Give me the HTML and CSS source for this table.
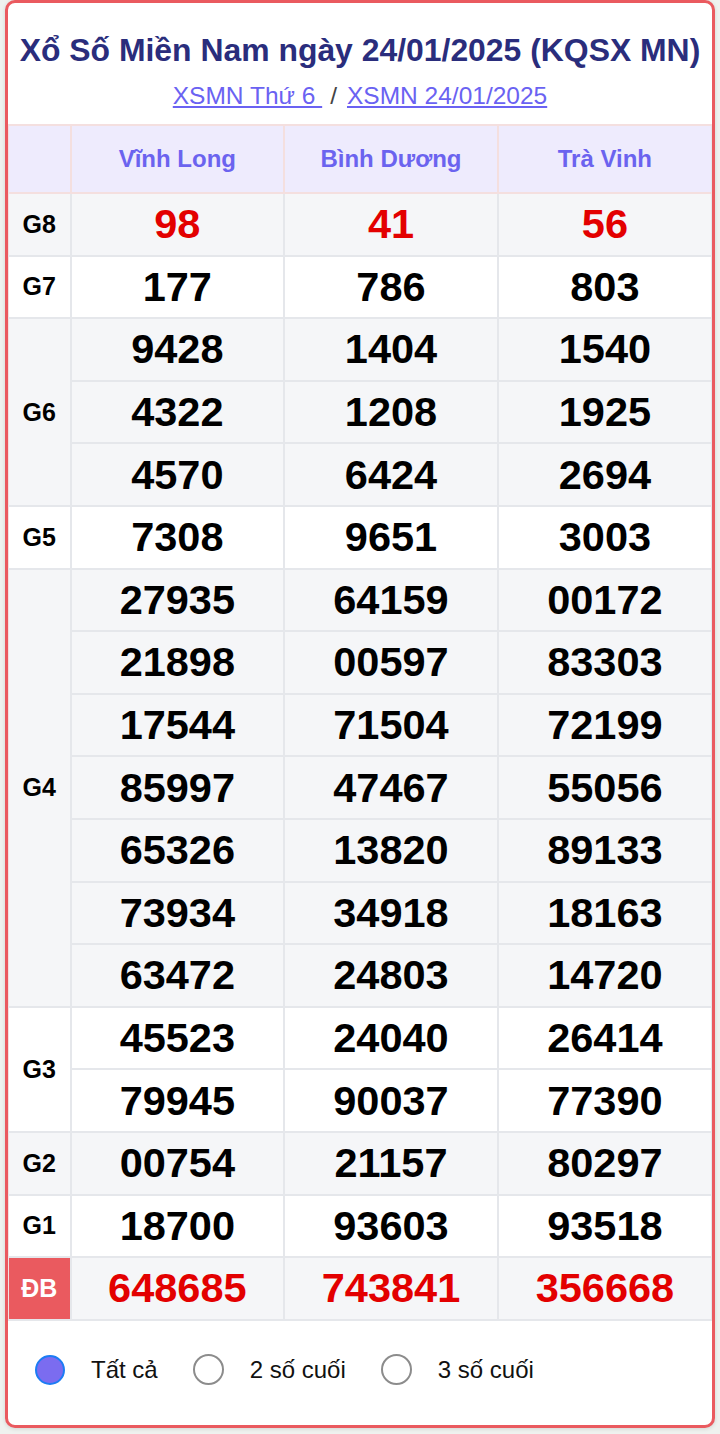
FILE: index.html
```html
<!DOCTYPE html>
<html lang="vi">
<head>
<meta charset="utf-8">
<title>XSMN 24/01/2025</title>
<link rel="stylesheet" href="styles.css">
</head>
<body>
<div class="card">
  <div class="head">
    <h1 class="title">Xổ Số Miền Nam ngày 24/01/2025 (KQSX MN)</h1>
    <div class="links"><a href="#">XSMN Thứ 6 </a><span class="sep">/</span><a href="#">XSMN 24/01/2025</a></div>
  </div>
  <table class="kq">
    <colgroup><col class="c-label"><col class="c-prov"><col class="c-prov"><col class="c-prov"></colgroup>
    <thead>
      <tr><th></th><th>Vĩnh Long</th><th>Bình Dương</th><th>Trà Vinh</th></tr>
    </thead>
    <tbody>
      <tr class="alt"><td class="lbl">G8</td><td class="num red">98</td><td class="num red">41</td><td class="num red">56</td></tr>
      <tr><td class="lbl">G7</td><td class="num">177</td><td class="num">786</td><td class="num">803</td></tr>
      <tr class="alt"><td class="lbl" rowspan="3">G6</td><td class="num">9428</td><td class="num">1404</td><td class="num">1540</td></tr>
      <tr class="alt"><td class="num">4322</td><td class="num">1208</td><td class="num">1925</td></tr>
      <tr class="alt"><td class="num">4570</td><td class="num">6424</td><td class="num">2694</td></tr>
      <tr><td class="lbl">G5</td><td class="num">7308</td><td class="num">9651</td><td class="num">3003</td></tr>
      <tr class="alt"><td class="lbl" rowspan="7">G4</td><td class="num">27935</td><td class="num">64159</td><td class="num">00172</td></tr>
      <tr class="alt"><td class="num">21898</td><td class="num">00597</td><td class="num">83303</td></tr>
      <tr class="alt"><td class="num">17544</td><td class="num">71504</td><td class="num">72199</td></tr>
      <tr class="alt"><td class="num">85997</td><td class="num">47467</td><td class="num">55056</td></tr>
      <tr class="alt"><td class="num">65326</td><td class="num">13820</td><td class="num">89133</td></tr>
      <tr class="alt"><td class="num">73934</td><td class="num">34918</td><td class="num">18163</td></tr>
      <tr class="alt"><td class="num">63472</td><td class="num">24803</td><td class="num">14720</td></tr>
      <tr><td class="lbl" rowspan="2">G3</td><td class="num">45523</td><td class="num">24040</td><td class="num">26414</td></tr>
      <tr><td class="num">79945</td><td class="num">90037</td><td class="num">77390</td></tr>
      <tr class="alt"><td class="lbl">G2</td><td class="num">00754</td><td class="num">21157</td><td class="num">80297</td></tr>
      <tr><td class="lbl">G1</td><td class="num">18700</td><td class="num">93603</td><td class="num">93518</td></tr>
      <tr class="alt"><td class="lbl db">ĐB</td><td class="num red">648685</td><td class="num red">743841</td><td class="num red">356668</td></tr>
    </tbody>
  </table>
  <div class="filters">
    <label class="opt"><span class="radio checked"></span>Tất cả</label>
    <label class="opt"><span class="radio"></span>2 số cuối</label>
    <label class="opt"><span class="radio"></span>3 số cuối</label>
  </div>
</div>
</body>
</html>
```

FILE: styles.css
```css
html, body {
  margin: 0;
  padding: 0;
  background: #eff2ef;
}
body {
  padding: 0 5px 6px 5px;
  font-family: "Liberation Sans", Arial, sans-serif;
}
.card {
  background: #fff;
  border: 3px solid #ea5a5f;
  border-radius: 10px;
  overflow: hidden;
  box-shadow: 0 1px 4px rgba(0,0,0,0.12);
}
.head {
  height: 121px;
  display: flex;
  flex-direction: column;
  align-items: center;
}
.title {
  margin: 27px 0 0 0;
  font-size: 31.9px;
  line-height: 40px;
  font-weight: bold;
  color: #2a2d7c;
  white-space: nowrap;
}
.links {
  margin-top: 11px;
  font-size: 24.5px;
  line-height: 30px;
  color: #444;
  display: flex;
}
.links a {
  color: #6a62f2;
  text-decoration: underline;
  white-space: pre;
}
.sep {
  margin: 0 10px 0 8px;
}
.kq {
  width: 100%;
  border-collapse: collapse;
  table-layout: fixed;
}
.c-label { width: 62px; }
.kq th {
  height: 66px;
  background: #eeebfd;
  border: 2px solid #f4dfdf;
  color: #6b63ef;
  font-size: 24px;
  font-weight: bold;
  padding: 0;
}
.kq td {
  height: 60.6px;
  border: 2px solid #e5e7eb;
  padding: 0;
  text-align: center;
  vertical-align: middle;
}
.kq th:first-child, .kq td:first-child { border-left: 1px solid #f4dfdf; }
.kq th:last-child, .kq td:last-child { border-right: 1px solid #e5e7eb; }
.kq tr.alt td { background: #f5f6f8; }
.lbl {
  font-size: 25px;
  font-weight: bold;
  color: #000;
}
.kq tr td.db {
  background: #ea5a5f;
  color: #fff;
}
.num {
  font-size: 41.5px;
  font-weight: bold;
  color: #000;
}
.num.red { color: #e30000; }
.filters {
  height: 98px;
  padding-bottom: 6px;
  display: flex;
  align-items: center;
  padding-left: 27px;
  gap: 35px;
}
.opt {
  display: flex;
  align-items: center;
  gap: 26px;
  font-size: 24px;
  color: #111;
}
.radio {
  width: 27px;
  height: 27px;
  border-radius: 50%;
  border: 2px solid #8c8c8c;
  background: #fff;
  flex: none;
}
.radio.checked {
  border: 2.5px solid #1c7cf4;
  background: #7b6cf0;
  width: 26px;
  height: 26px;
}
```
